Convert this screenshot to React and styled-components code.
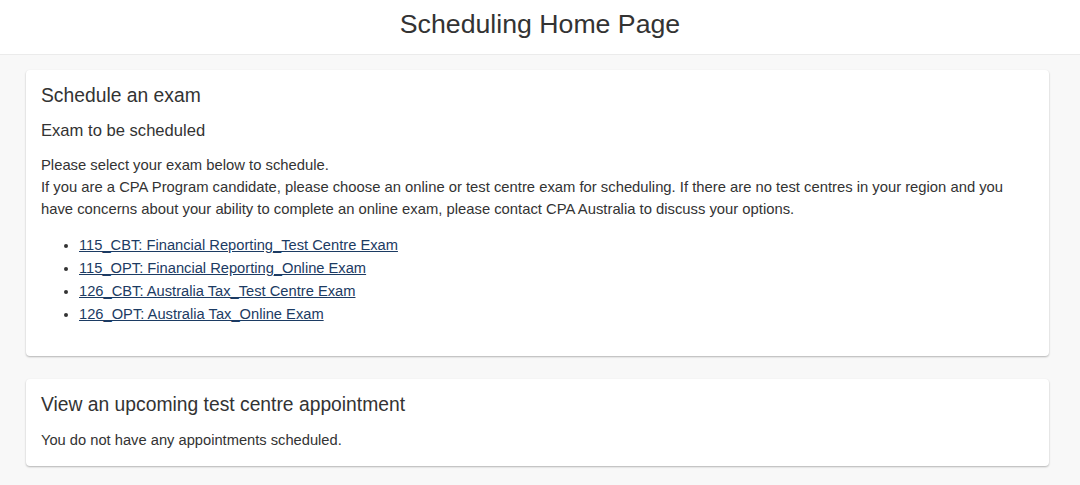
import React from 'react'
import styled, { createGlobalStyle } from 'styled-components'

const exams = [
    '115_CBT: Financial Reporting_Test Centre Exam',
    '115_OPT: Financial Reporting_Online Exam',
    '126_CBT: Australia Tax_Test Centre Exam',
    '126_OPT: Australia Tax_Online Exam',
]

function App() {
    return (
        <Page>
            <GlobalStyle />
            <Header>
                <h1>Scheduling Home Page</h1>
            </Header>
            <Main>
                <Card>
                    <CardTitle>Schedule an exam</CardTitle>
                    <SubTitle>Exam to be scheduled</SubTitle>
                    <Text>
                        Please select your exam below to schedule.<br />
                        If you are a CPA Program candidate, please choose an online or test centre exam for scheduling. If there are no test centres in your region and you have concerns about your ability to complete an online exam, please contact CPA Australia to discuss your options.
                    </Text>
                    <ExamList>
                        {exams.map(exam => (
                            <li key={exam}>
                                <a href="#">{exam}</a>
                            </li>
                        ))}
                    </ExamList>
                </Card>
                <Card>
                    <CardTitle>View an upcoming test centre appointment</CardTitle>
                    <Note>You do not have any appointments scheduled.</Note>
                </Card>
            </Main>
        </Page>
    )
}

export default App

const GlobalStyle = createGlobalStyle`
    body{
        margin: 0;
        background: #f8f8f8;
        font-family: "Liberation Sans", Arial, sans-serif;
        color: #333;
    }
`
const Page = styled.div`
    min-height: 485px;
`
const Header = styled.header`
    height: 54px;
    background: #fff;
    border-bottom: 1px solid #ebebeb;
    display: flex;
    align-items: center;
    justify-content: center;

    h1{
        margin: 0 0 6px;
        font-size: 26.7px;
        font-weight: normal;
        color: #333;
    }
`
const Main = styled.main`
    padding: 15px 31px 0 26px;
    display: flex;
    flex-direction: column;
    gap: 23px;
`
const Card = styled.section`
    background: #fff;
    border-radius: 4px;
    padding: 15px;
    box-shadow: 0 1px 2px rgba(0, 0, 0, 0.28);
`
const CardTitle = styled.h2`
    margin: 0;
    font-size: 19.3px;
    line-height: 22px;
    font-weight: normal;
`
const SubTitle = styled.h3`
    margin: 13px 0 0;
    font-size: 16.6px;
    line-height: 21px;
    font-weight: normal;
`
const Text = styled.p`
    margin: 13px 0 0;
    padding-right: 20px;
    font-size: 14.8px;
    line-height: 22px;
`
const ExamList = styled.ul`
    margin: 14px 0 15px;
    padding-left: 38px;
    font-size: 14.7px;
    line-height: 23px;

    a{
        color: #1c3b63;
        text-decoration: underline;
    }
`
const Note = styled.p`
    margin: 14px 0 1px;
    font-size: 14.7px;
    line-height: 20px;
`
